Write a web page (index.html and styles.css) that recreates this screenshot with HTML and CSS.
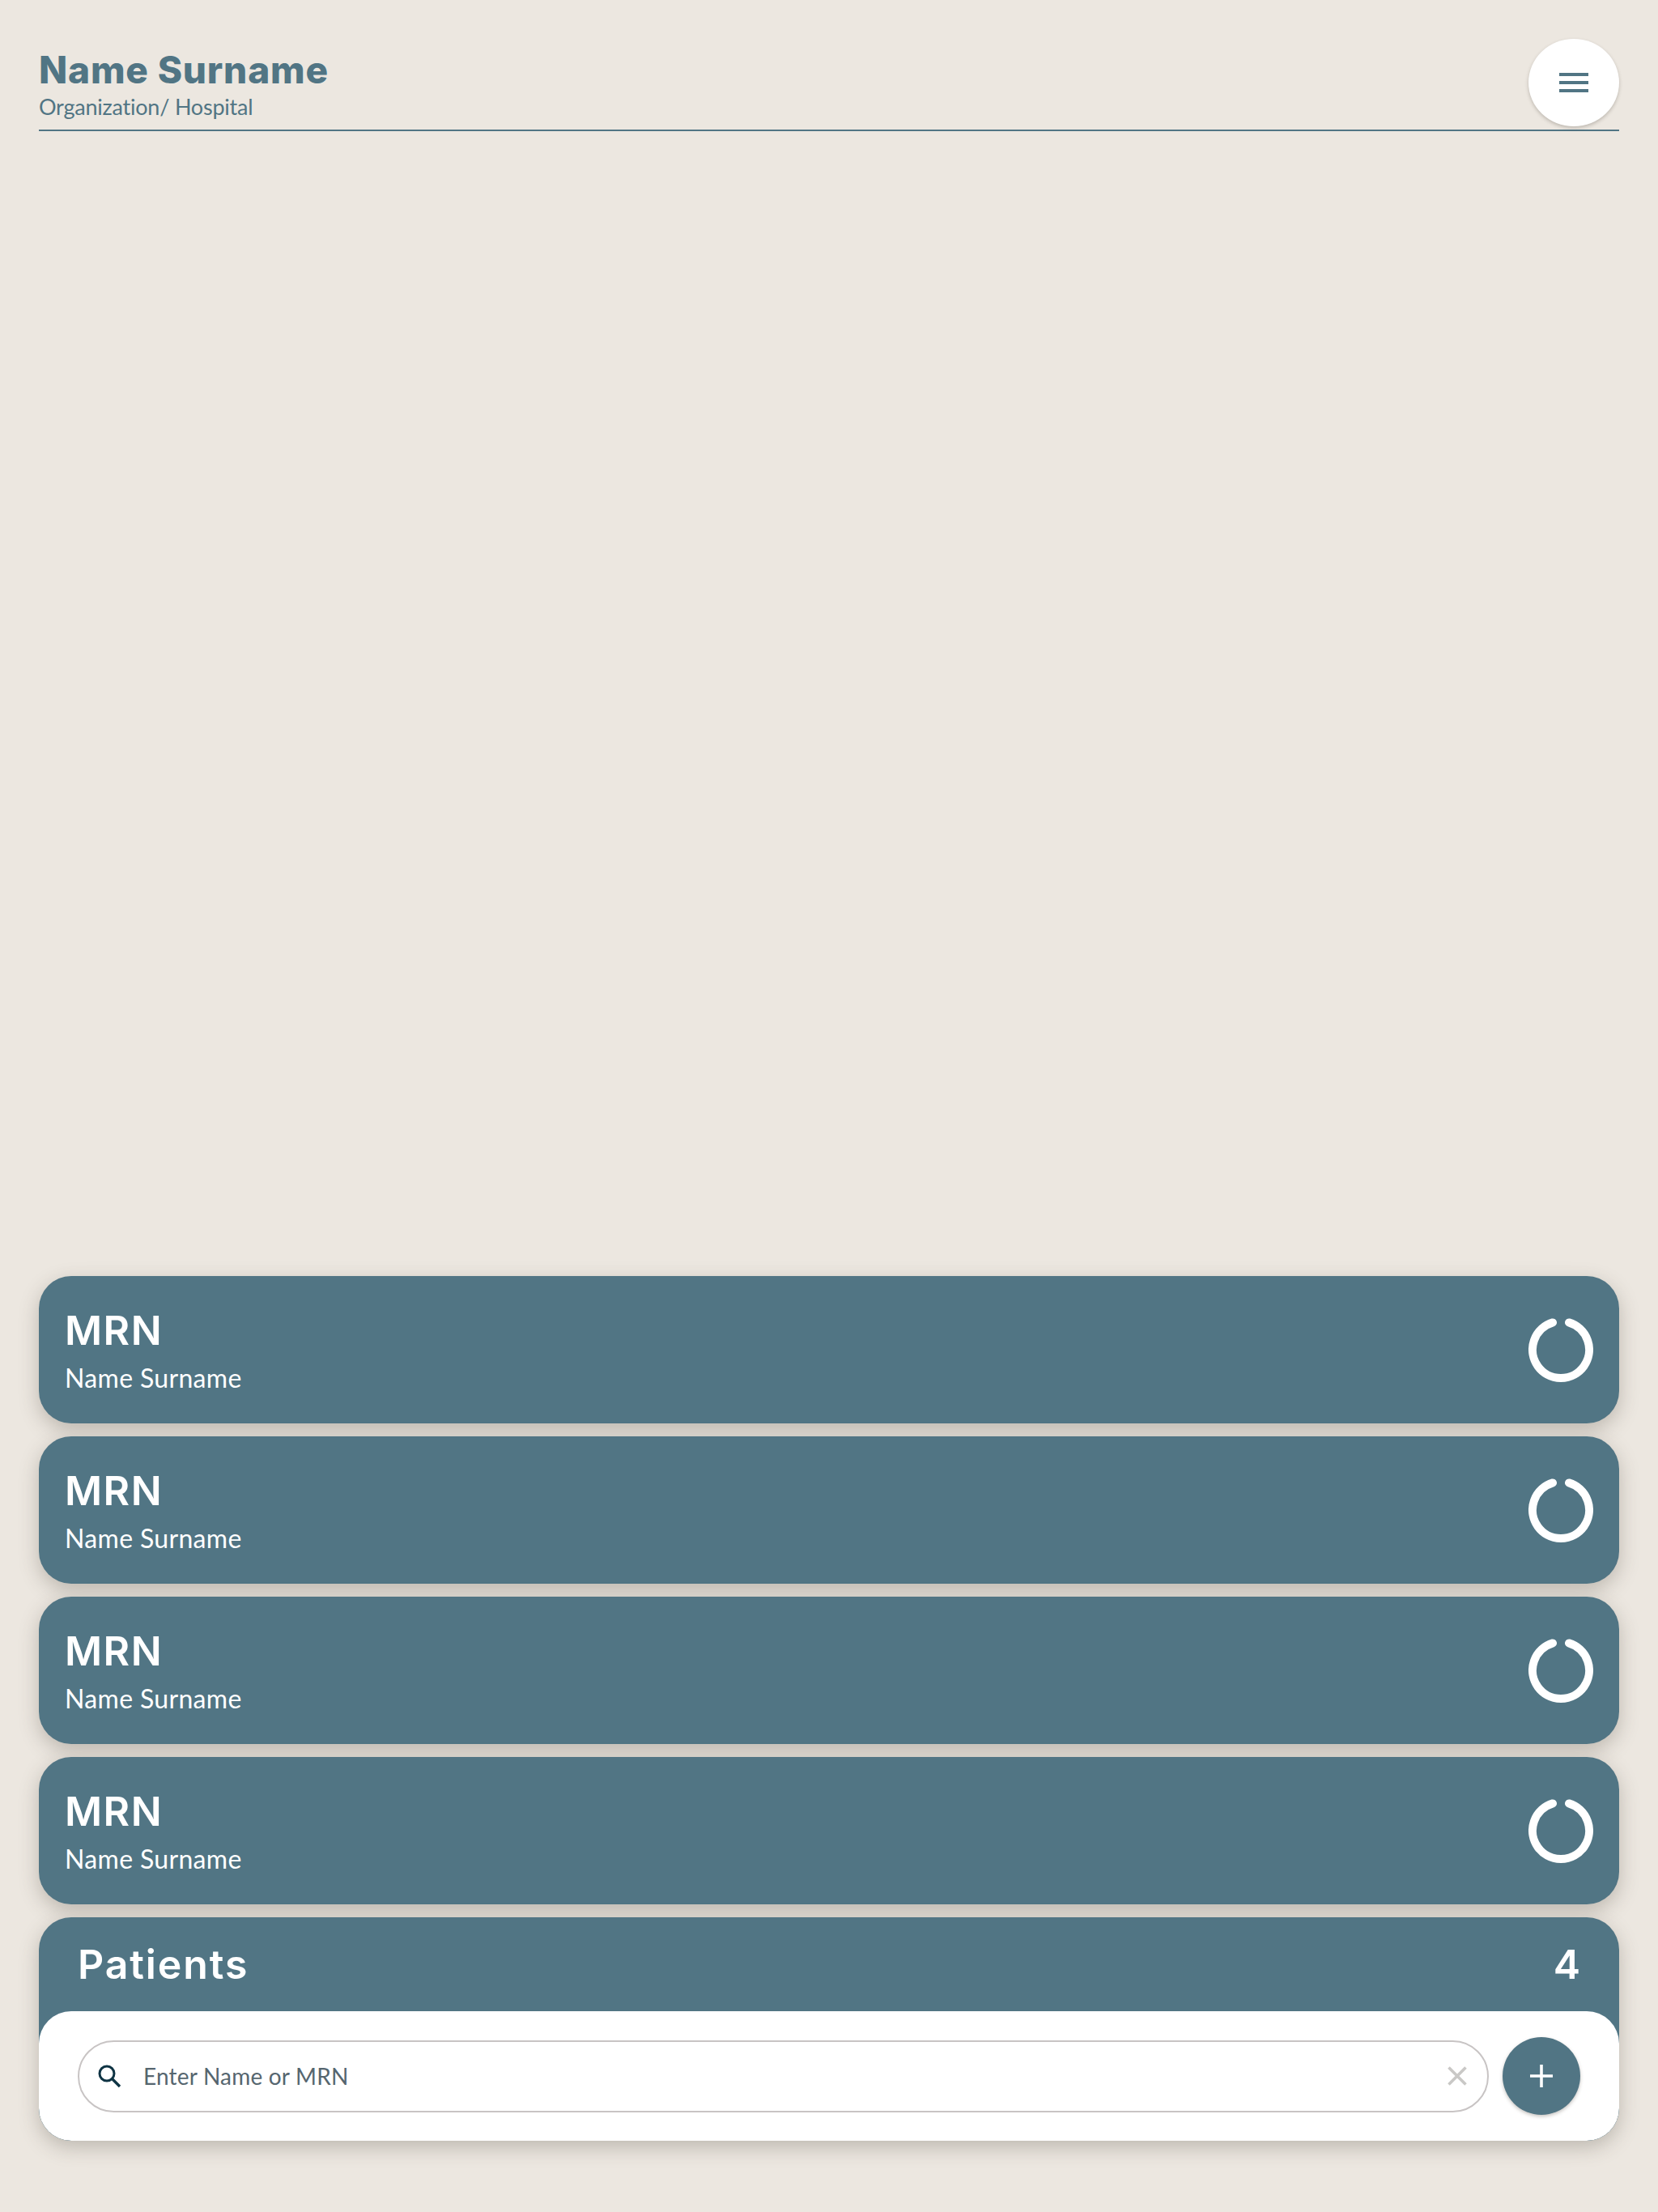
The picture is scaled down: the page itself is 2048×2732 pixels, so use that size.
FILE: index.html
```html
<!DOCTYPE html>
<html lang="en">
<head>
<meta charset="utf-8">
<title>Patients</title>
<link rel="stylesheet" href="styles.css">
</head>
<body>
<div class="page">
  <header class="top">
    <div class="who">
      <div class="who-name">Name Surname</div>
      <div class="who-org">Organization/ Hospital</div>
    </div>
    <button class="menu" aria-label="Menu">
      <svg width="36" height="24" viewBox="0 0 36 24"><path d="M0 0h36v4H0zM0 10h36v4H0zM0 20h36v4H0z" fill="#517584"/></svg>
    </button>
  </header>
  <main class="list">
    <article class="card">
      <div><div class="mrn">MRN</div><div class="pname">Name Surname</div></div>
      <svg class="ring" width="80" height="80" viewBox="0 0 80 80"><path d="M30 6.4A35 35 0 1 0 50 6.4" fill="none" stroke="#fff" stroke-width="10" stroke-linecap="round"/></svg>
    </article>
    <article class="card">
      <div><div class="mrn">MRN</div><div class="pname">Name Surname</div></div>
      <svg class="ring" width="80" height="80" viewBox="0 0 80 80"><path d="M30 6.4A35 35 0 1 0 50 6.4" fill="none" stroke="#fff" stroke-width="10" stroke-linecap="round"/></svg>
    </article>
    <article class="card">
      <div><div class="mrn">MRN</div><div class="pname">Name Surname</div></div>
      <svg class="ring" width="80" height="80" viewBox="0 0 80 80"><path d="M30 6.4A35 35 0 1 0 50 6.4" fill="none" stroke="#fff" stroke-width="10" stroke-linecap="round"/></svg>
    </article>
    <article class="card">
      <div><div class="mrn">MRN</div><div class="pname">Name Surname</div></div>
      <svg class="ring" width="80" height="80" viewBox="0 0 80 80"><path d="M30 6.4A35 35 0 1 0 50 6.4" fill="none" stroke="#fff" stroke-width="10" stroke-linecap="round"/></svg>
    </article>
    <section class="panel">
      <div class="panel-head"><span class="panel-title">Patients</span><span class="panel-count">4</span></div>
      <div class="panel-body">
        <div class="search">
          <svg class="search-icon" width="30" height="30" viewBox="0 0 30 30"><circle cx="12" cy="12" r="9" fill="none" stroke="#0f3444" stroke-width="3"/><path d="M18.5 18.5L28 28" stroke="#0f3444" stroke-width="3.4" fill="none"/></svg>
          <span class="placeholder">Enter Name or MRN</span>
          <svg class="clear" width="24" height="24" viewBox="0 0 24 24"><path d="M1.5 1.5L22.5 22.5M22.5 1.5L1.5 22.5" stroke="#c9c8c6" stroke-width="3.6" fill="none"/></svg>
        </div>
        <button class="add" aria-label="Add">
          <svg width="30" height="30" viewBox="0 0 30 30"><path d="M15 1v28M1 15h28" stroke="#fff" stroke-width="3.6" fill="none"/></svg>
        </button>
      </div>
    </section>
  </main>
</div>
</body>
</html>
```
FILE: styles.css
```css
* { box-sizing: border-box; }
html, body { margin: 0; padding: 0; }
body { background: #ece7e0; color: #517584; font-family: "Lato", "Open Sans", sans-serif; }
.page { height: 2732px; padding: 48px 48px 88px; display: flex; flex-direction: column; justify-content: space-between; }
.top { height: 114px; display: flex; justify-content: space-between; align-items: flex-start; border-bottom: 2px solid #517584; }
.who { padding-top: 13px; }
.who-name { font-family: "Inter", sans-serif; font-weight: 800; font-size: 46px; line-height: 50px; letter-spacing: 0.8px; }
.who-org { font-size: 27px; line-height: 36px; margin-top: 3px; letter-spacing: -0.22px; }
.menu { width: 112px; height: 108px; border: 0; border-radius: 50%; background: #fff; padding: 0; display: flex; align-items: center; justify-content: center; box-shadow: 0 2px 4px rgba(70,60,50,.28); }
.list { display: flex; flex-direction: column; gap: 16px; }
.card { height: 182px; background: #517584; border-radius: 40px; padding: 0 32px; color: #fff; display: flex; justify-content: space-between; align-items: center; box-shadow: 0 8px 24px rgba(70,60,50,.28); }
.mrn { font-family: "Inter", sans-serif; font-weight: 600; font-size: 50px; line-height: 56px; letter-spacing: 1.5px; margin-top: 3px; }
.pname { font-size: 32px; line-height: 40px; margin-top: 11px; letter-spacing: 0.33px; }
.ring { display: block; }
.panel { height: 276px; background: #517584; border-radius: 40px; display: flex; flex-direction: column; justify-content: space-between; box-shadow: 0 8px 24px rgba(70,60,50,.28); overflow: hidden; }
.panel-head { height: 116px; padding: 0 48px; display: flex; justify-content: space-between; align-items: center; color: #fff; font-family: "Inter", sans-serif; font-weight: 600; font-size: 50px; }
.panel-title { letter-spacing: 1.9px; }
.panel-body { height: 160px; background: #fff; border-radius: 40px; padding: 32px 48px; display: flex; align-items: center; gap: 17px; }
.search { flex: 1; height: 89px; border: 2px solid #c8c4c4; border-radius: 45px; display: flex; align-items: center; padding: 0 25px 0 22px; }
.search-icon { flex: none; }
.placeholder { flex: 1; margin-left: 27px; font-size: 28px; letter-spacing: 0.2px; color: #56666f; }
.clear { flex: none; }
.add { width: 96px; height: 96px; flex: none; border: 0; border-radius: 50%; padding: 0; background: #517584; display: flex; align-items: center; justify-content: center; box-shadow: 0 2px 4px rgba(70,60,50,.3); }
```
